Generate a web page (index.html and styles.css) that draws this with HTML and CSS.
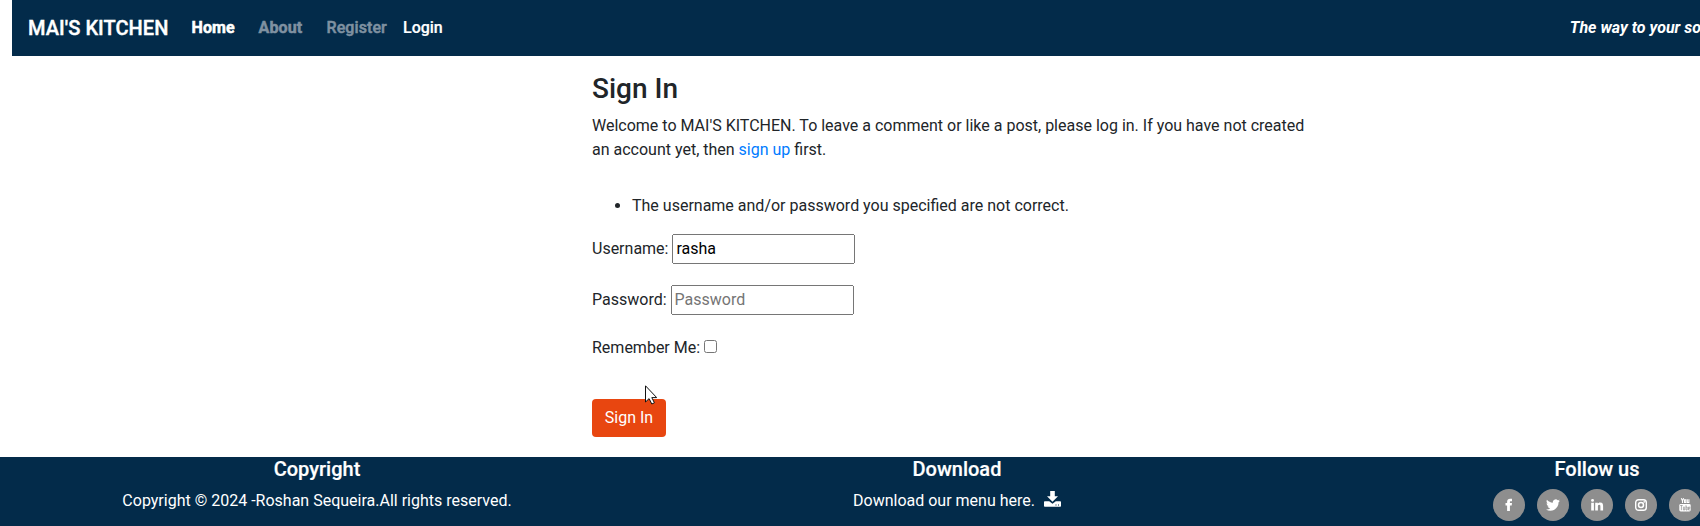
FILE: index.html
```html
<!DOCTYPE html>
<html lang="en">
<head>
<meta charset="utf-8">
<title>Mai's Kitchen - Sign In</title>
<link rel="stylesheet" href="styles.css">
</head>
<body>
<div class="page">
  <nav class="navbar">
    <a class="brand">MAI'S KITCHEN</a>
    <a class="nav-link active">Home</a>
    <a class="nav-link muted about">About</a>
    <a class="nav-link muted register">Register</a>
    <a class="nav-link login">Login</a>
    <span class="tagline">The way to your soul is through food</span>
  </nav>
  <main class="content">
    <h3 class="title">Sign In</h3>
    <p class="intro">Welcome to MAI'S KITCHEN. To leave a comment or like a post, please log in. If you have not created an account yet, then <a class="link">sign up</a> first.</p>
    <ul class="errors"><li>The username and/or password you specified are not correct.</li></ul>
    <form class="form">
      <div class="field"><label for="user">Username:</label><input class="input" id="user" type="text" value="rasha"></div>
      <div class="field"><label for="pass">Password:</label><input class="input" id="pass" type="password" placeholder="Password"></div>
      <div class="remember"><label for="rem">Remember Me:</label><input class="check" id="rem" type="checkbox"></div>
      <button class="button" type="button">Sign In</button>
    </form>
    <svg class="pointer" width="12" height="20" viewBox="0 0 12 20"><path d="M.5.8V17l3.600-3.400 2.700 5.400 2.600-1.200-2.600-5.200h4.900z" fill="#fff" stroke="#111" stroke-width="1"/></svg>
  </main>
  <footer class="footer">
    <section class="col"><h5 class="heading">Copyright</h5><p class="text">Copyright © 2024 -Roshan Sequeira.All rights reserved.</p></section>
    <section class="col"><h5 class="heading">Download</h5><p class="text">Download our menu here. <svg class="download" width="17" height="16" viewBox="0 0 17 16"><path fill="#fff" fill-rule="evenodd" d="M6.200 0h4.600v5.200H14L8.500 10.700 3 5.200h3.200zM.8 10.300h4.400l3.300 2.500 3.300-2.500h4.400q.8 0 .8.800v3.900q0 .8-.8.800H.8q-.8 0-.8-.8v-3.900q0-.8.800-.8zM11.500 13.400v1h1v-1zm2.500 0v1h1v-1z"/></svg></p></section>
    <section class="col"><h5 class="heading">Follow us</h5>
      <div class="social">
        <a class="circle"><svg width="14" height="14" viewBox="0 0 14 14"><path fill="#fff" d="M5.100 13V7.400H3.500V5h1.600V3.700C5.100 1.700 6.300.7 8.100.7H10v2.500H8.900c-.8 0-1 .4-1 1V5H10l-.3 2.400H7.900V13z"/></svg></a>
        <a class="circle"><svg width="14" height="14" viewBox="0 0 24 24"><path fill="#fff" d="M23.950 4.570a10 10 0 0 1-2.820.77 4.960 4.960 0 0 0 2.160-2.720c-.95.55-2 .95-3.130 1.180a4.920 4.920 0 0 0-8.380 4.480C7.690 8.090 4.070 6.130 1.640 3.160a4.820 4.820 0 0 0-.67 2.480c0 1.700.87 3.200 2.190 4.080a4.900 4.900 0 0 1-2.230-.62v.06a4.920 4.920 0 0 0 3.950 4.830 5 5 0 0 1-2.210.08 4.940 4.940 0 0 0 4.600 3.420A9.870 9.870 0 0 1 0 19.540a13.990 13.990 0 0 0 7.550 2.210c9.050 0 14-7.500 14-13.980 0-.21 0-.42-.02-.63a9.940 9.940 0 0 0 2.460-2.550z"/></svg></a>
        <a class="circle"><svg width="14" height="14" viewBox="0 0 14 14"><path fill="#fff" d="M1.200 4.700h2.700V12.500H1.200zM5.200 4.700h2.600v1.100c.4-.7 1.200-1.300 2.400-1.300 2.500 0 2.900 1.600 2.900 3.600v4.400h-2.700V8.700c0-1-.1-1.900-1.200-1.900s-1.300.9-1.300 1.900v3.800H5.200z"/><circle cx="2.550" cy="2.400" r="1.450" fill="#fff"/></svg></a>
        <a class="circle"><svg width="14" height="14" viewBox="0 0 14 14" fill="none" stroke="#fff"><rect x="1.700" y="1.700" width="10.600" height="10.600" rx="2.800" stroke-width="1.400"/><circle cx="7" cy="7" r="2.500" stroke-width="1.500"/><circle cx="10.200" cy="3.900" r=".8" fill="#fff" stroke="none"/></svg></a>
        <a class="circle"><svg width="14" height="14" viewBox="0 0 14 14" fill="none"><rect x="1.300" y="6" width="11.400" height="7.500" rx="1.400" fill="#fff"/><path stroke="#fff" stroke-width="1.100" d="M3.300.2l1.200 2.600V5M5.700.2L4.500 2.800M6.500 1.800h1.300v2.700H6.500zM9.300 1.300v3.200h1.600V1.300"/><path stroke="#8e8e8e" stroke-width=".7" d="M2.200 7.500h2.500M3.400 7.500v4.700M5.400 8.700V12h1.300V8.700M8 7.200V12h1.200V9H8M11.800 10.600h-1.300M11.800 12h-1.300V9h1.300v1.500"/></svg></a>
      </div>
    </section>
  </footer>
</div>
</body>
</html>
```
FILE: styles.css
```css
* { box-sizing: border-box; }
body { margin: 0; overflow: hidden; background: #fff; color: #212529; font: 16px/24px Roboto, sans-serif; }
.page { width: 1917px; height: 526px; display: flex; flex-direction: column; }
.navbar { height: 56px; flex: none; margin-left: 12px; padding-left: 16px; background: #032b4a; color: #fff; display: flex; align-items: center; }
.brand { width: 163.500px; font-size: 20px; font-weight: 500; letter-spacing: .06px; -webkit-text-stroke: .4px; white-space: nowrap; }
.nav-link { font-weight: 500; -webkit-text-stroke: .2px; }
.active { font-weight: 700; width: 67px; letter-spacing: .1px; -webkit-text-stroke: .5px; }
.muted { color: #7f91a1; font-weight: 700; -webkit-text-stroke: .5px; }
.about { width: 68px; letter-spacing: .15px; }
.register { width: 76.500px; font-weight: 500; letter-spacing: .1px; }
.tagline { margin-left: 1127px; font-weight: 700; font-style: italic; white-space: nowrap; }
.content { width: 730px; height: 401px; flex: none; margin-left: 592px; padding-top: 16px; position: relative; }
.title { margin: 0 0 8px; font-size: 28px; line-height: 33.600px; font-weight: 500; }
.intro { margin: 0 0 32px; }
.link { color: #007bff; }
.errors { margin: 0 0 16px; padding-left: 40px; }
.form { display: flex; flex-direction: column; align-items: flex-start; }
.field { height: 30px; margin-bottom: 21px; display: flex; align-items: center; gap: 4px; }
.input { width: 183px; height: 30px; padding: 1px 2px; font: inherit; }
.remember { height: 24px; display: flex; align-items: center; gap: 4px; margin-bottom: 39.500px; }
.check { width: 13px; height: 13px; margin: 0 0 2px; }
.button { width: 74px; height: 38px; padding: 0; border: 0; border-radius: 4px; background: #e84610; color: #fff; font: inherit; }
.pointer { position: absolute; left: 53px; top: 329px; }
.footer { height: 69px; flex: none; margin-left: -3px; background: #032b4a; color: #fff; display: grid; grid-template-columns: repeat(3, 640px); text-align: center; }
.heading { margin: 0 0 8px; font-size: 20px; line-height: 24px; font-weight: 500; -webkit-text-stroke: .2px; }
.text { margin: 0; }
.download { margin-left: 5px; vertical-align: -1px; }
.social { display: flex; justify-content: center; gap: 12px; }
.circle { width: 32px; height: 32px; border-radius: 50%; background: #8e8e8e; display: flex; align-items: center; justify-content: center; }
```
